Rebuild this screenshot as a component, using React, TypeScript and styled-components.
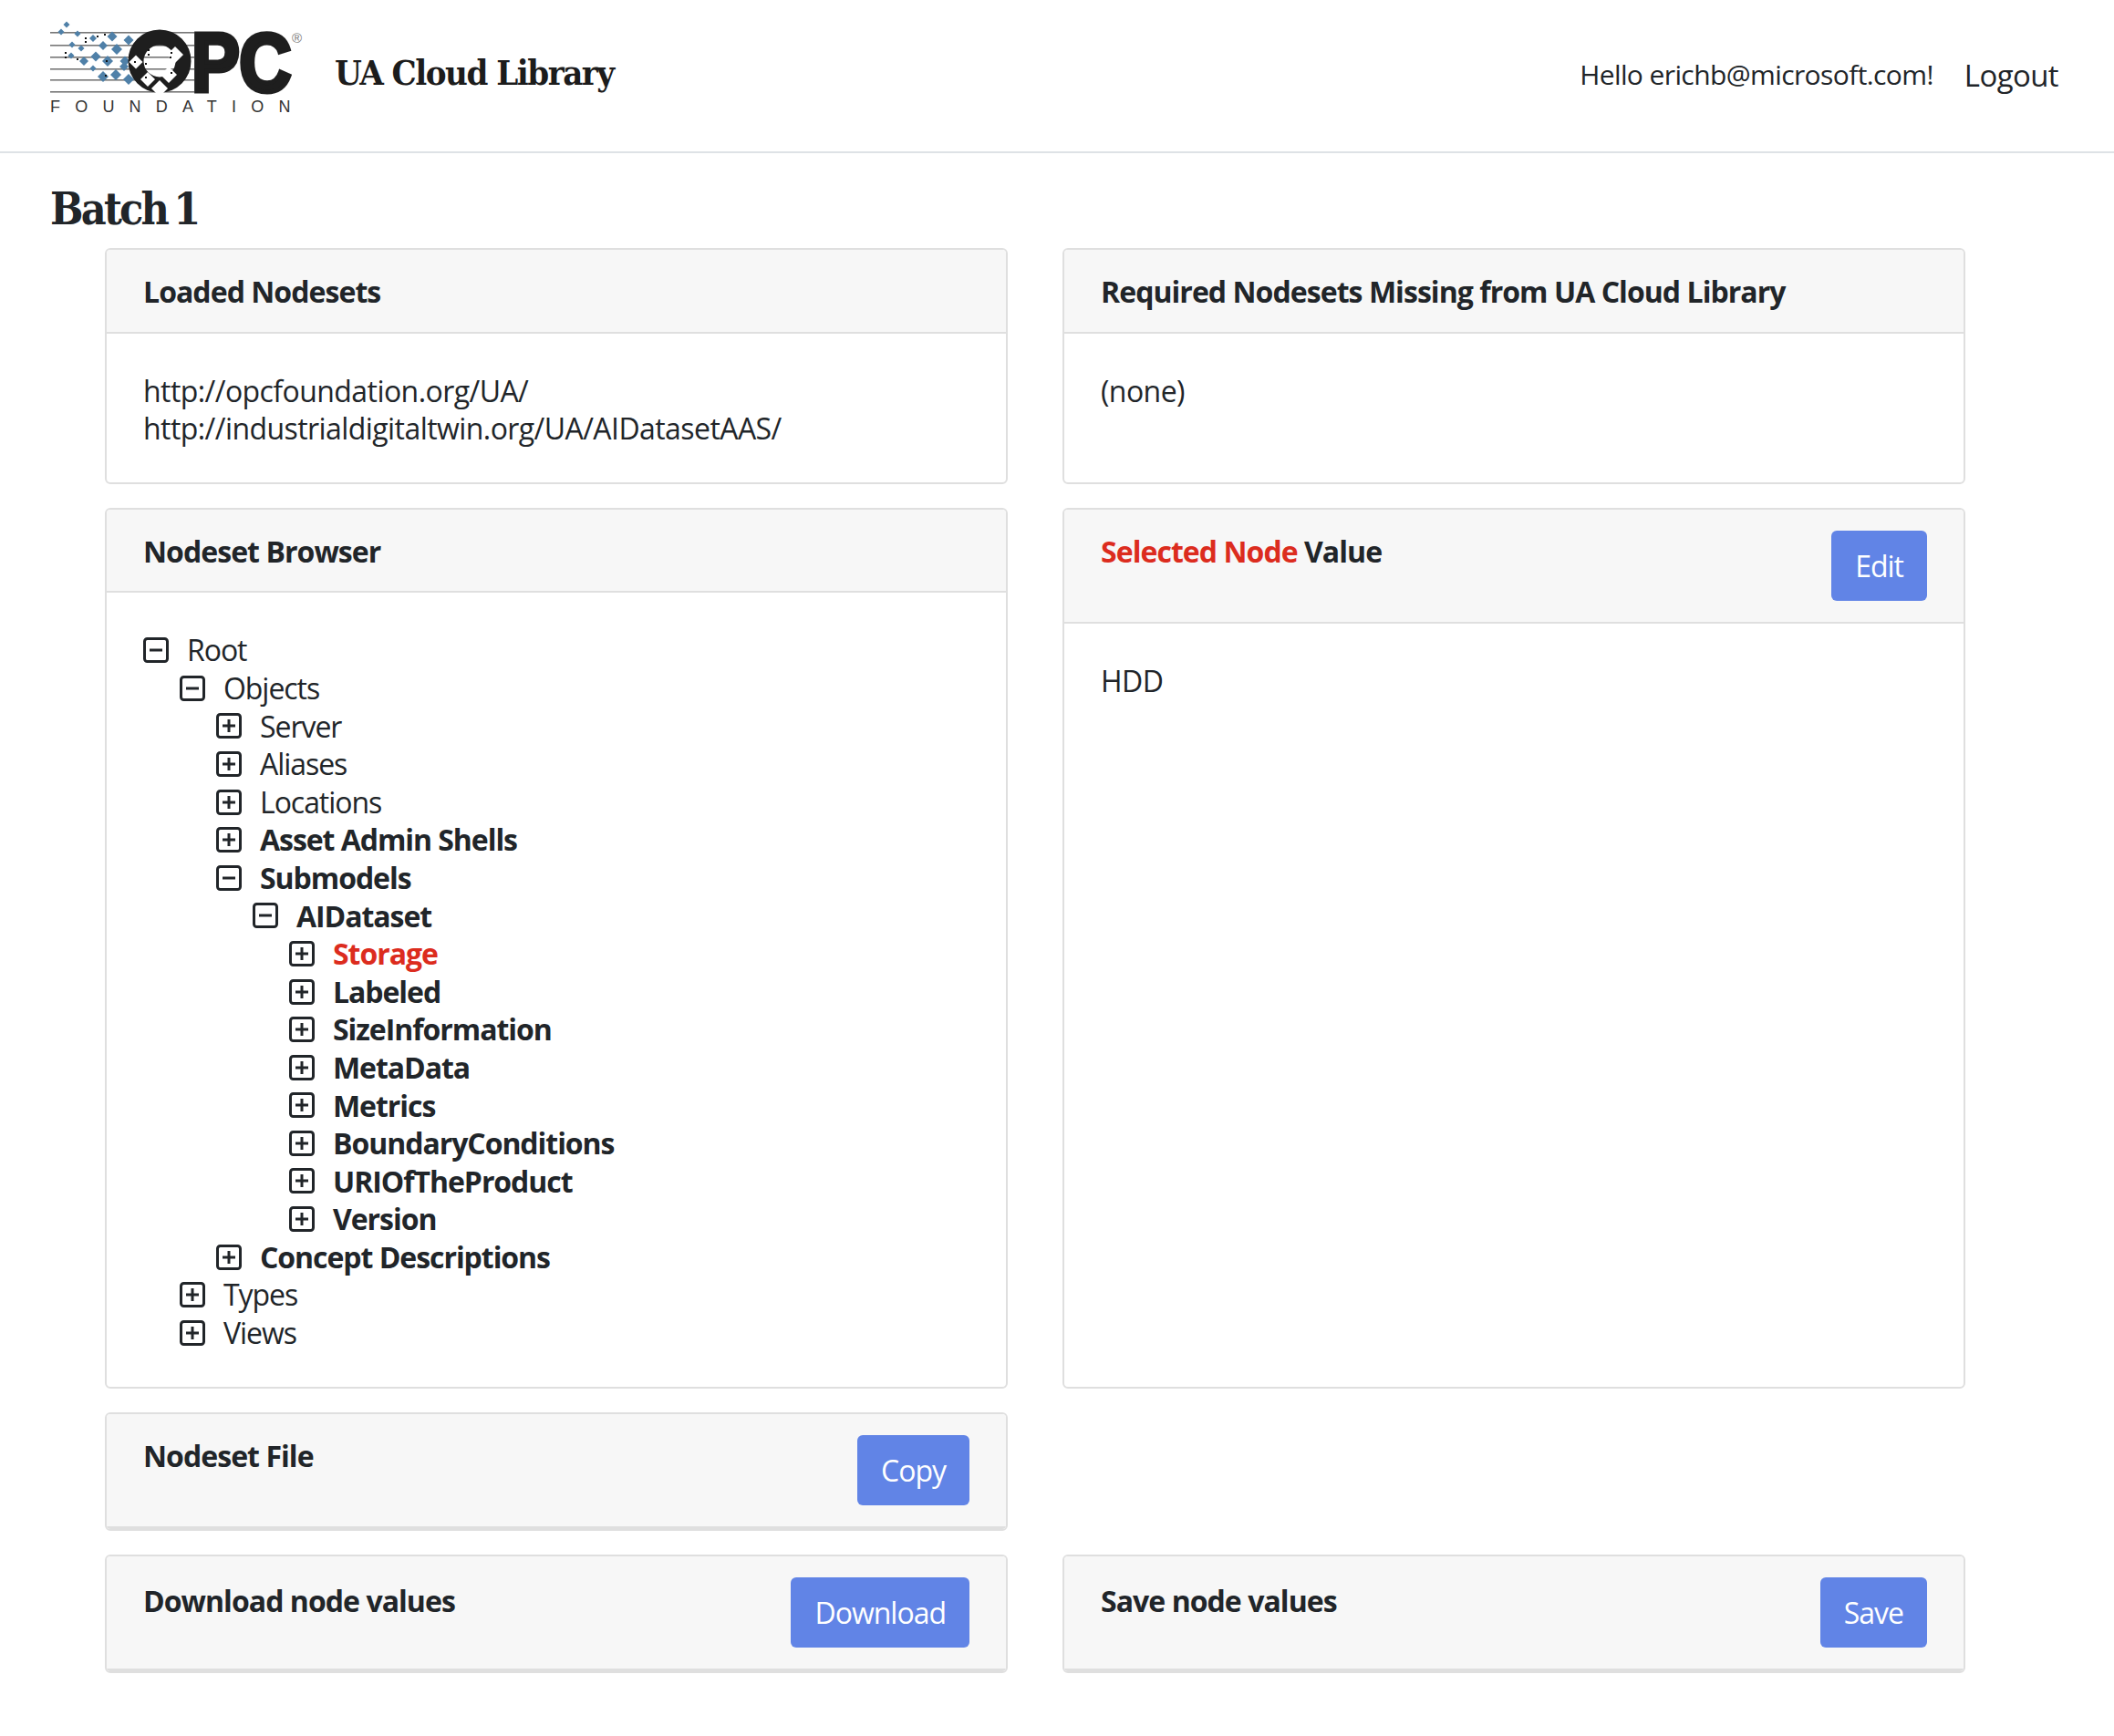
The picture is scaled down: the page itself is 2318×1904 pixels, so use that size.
import * as React from 'react'
import styled, { createGlobalStyle } from 'styled-components'

const dark = '#212529'
const red = '#dc2c1e'
const logoBlack = '#1e1e1e'

type TreeNode = {
  label: string
  depth: number
  open?: boolean
  bold?: boolean
  selected?: boolean
}

const nodes: TreeNode[] = [
  { label: 'Root', depth: 0, open: true },
  { label: 'Objects', depth: 1, open: true },
  { label: 'Server', depth: 2 },
  { label: 'Aliases', depth: 2 },
  { label: 'Locations', depth: 2 },
  { label: 'Asset Admin Shells', depth: 2, bold: true },
  { label: 'Submodels', depth: 2, open: true, bold: true },
  { label: 'AIDataset', depth: 3, open: true, bold: true },
  { label: 'Storage', depth: 4, bold: true, selected: true },
  { label: 'Labeled', depth: 4, bold: true },
  { label: 'SizeInformation', depth: 4, bold: true },
  { label: 'MetaData', depth: 4, bold: true },
  { label: 'Metrics', depth: 4, bold: true },
  { label: 'BoundaryConditions', depth: 4, bold: true },
  { label: 'URIOfTheProduct', depth: 4, bold: true },
  { label: 'Version', depth: 4, bold: true },
  { label: 'Concept Descriptions', depth: 2, bold: true },
  { label: 'Types', depth: 1 },
  { label: 'Views', depth: 1 },
]

// logo parts, in the svg's own units
const blueDiamonds = [
  [19, 7, 3.5], [13, 15, 3.5], [31, 17, 3.5], [48, 22, 4], [69, 20, 5.5], [87, 24, 5.5],
  [25, 29, 3.5], [35, 33, 3.5], [59, 30, 5], [74, 34, 6], [24, 41, 3.5], [51, 42, 5.5],
  [64, 47, 6], [38, 47, 5], [83, 47, 5.5], [48, 55, 3.5], [82, 53, 5], [59, 64, 6],
  [73, 62, 6], [87, 67, 6],
]
const whiteDiamonds = [
  [95, 48, 7.5], [138, 40, 9], [108, 67, 8], [131, 62, 9], [121, 77, 9],
]
const blackDots = [
  [40, 22], [40, 26], [18, 38], [18, 43], [61, 18], [53, 20], [31, 45], [62, 63], [63, 47],
  [109, 35], [109, 40], [134, 38], [133, 43], [134, 60], [94, 48], [106, 65], [106, 50],
]
const logoLines = [15, 29, 42, 55, 67, 80]

const diamond = (x: number, y: number, r: number) =>
  `${x},${y - r} ${x + r},${y} ${x},${y + r} ${x - r},${y}`

const Logo = () => (
  <svg width="290" height="138" viewBox="0 -6 290 138">
    {logoLines.map(y => (
      <rect key={y} x="1" y={y} width="158" height="1.6" fill="#777" />
    ))}
    {blueDiamonds.map(([x, y, r]) => (
      <polygon key={`${x}-${y}`} points={diamond(x, y, r)} fill="#4f80a8" />
    ))}
    <circle cx="121" cy="47" r="26" fill="none" stroke={logoBlack} strokeWidth="17" />
    {whiteDiamonds.map(([x, y, r]) => (
      <polygon key={`${x}-${y}`} points={diamond(x, y, r)} fill="#fff" />
    ))}
    {blackDots.map(([x, y]) => (
      <rect key={`${x}-${y}`} x={x - 1} y={y - 1} width="2" height="2" fill="#111" />
    ))}
    <text
      transform="translate(156 80) scale(0.88 1)"
      fontFamily="'Liberation Sans', sans-serif"
      fontWeight="700"
      fontSize="90"
      fill={logoBlack}
      stroke={logoBlack}
      strokeWidth="5"
    >
      PC
    </text>
    <text x="266" y="27" fontFamily="'Liberation Sans', sans-serif" fontSize="15" fill="#777">
      ®
    </text>
    <text
      x="1"
      y="103"
      fontFamily="'Liberation Sans', sans-serif"
      fontSize="18"
      fill="#333"
      letterSpacing="16.2"
    >
      FOUNDATION
    </text>
  </svg>
)

const Box = ({ open }: { open?: boolean }) => (
  <svg width="28" height="28" viewBox="0 0 28 28" fill="none" stroke={dark} strokeWidth="3">
    <rect x="1.5" y="1.5" width="25" height="25" rx="3" />
    <path d={open ? 'M7 14h14' : 'M7 14h14M14 7v14'} />
  </svg>
)

export default function App() {
  return (
    <>
      <GlobalStyle />
      <Header>
        <Brand>
          <Logo />
          <BrandName>UA Cloud Library</BrandName>
        </Brand>
        <UserArea>
          <Hello>Hello erichb@microsoft.com!</Hello>
          <Logout href="#">Logout</Logout>
        </UserArea>
      </Header>
      <Main>
        <PageTitle>Batch 1</PageTitle>
        <Grid>
          <Card>
            <CardHeader>
              <CardTitle>Loaded Nodesets</CardTitle>
            </CardHeader>
            <CardBody>
              <div>http://opcfoundation.org/UA/</div>
              <div>http://industrialdigitaltwin.org/UA/AIDatasetAAS/</div>
            </CardBody>
          </Card>
          <Card>
            <CardHeader>
              <CardTitle>Required Nodesets Missing from UA Cloud Library</CardTitle>
            </CardHeader>
            <CardBody>(none)</CardBody>
          </Card>
          <Card>
            <CardHeader>
              <CardTitle>Nodeset Browser</CardTitle>
            </CardHeader>
            <CardBody>
              <Tree>
                {nodes.map(node => (
                  <TreeRow key={node.label} $depth={node.depth}>
                    <Box open={node.open} />
                    <TreeLabel $bold={node.bold} $selected={node.selected}>
                      {node.label}
                    </TreeLabel>
                  </TreeRow>
                ))}
              </Tree>
            </CardBody>
          </Card>
          <Card>
            <ActionHeader>
              <ActionTitle>
                <Selected>Selected Node</Selected> Value
              </ActionTitle>
              <Button>Edit</Button>
            </ActionHeader>
            <CardBody>HDD</CardBody>
          </Card>
          <Card>
            <FooterHeader>
              <ActionTitle>Nodeset File</ActionTitle>
              <Button>Copy</Button>
            </FooterHeader>
          </Card>
          <div />
          <Card>
            <FooterHeader>
              <ActionTitle $drop={5}>Download node values</ActionTitle>
              <Button>Download</Button>
            </FooterHeader>
          </Card>
          <Card>
            <FooterHeader>
              <ActionTitle $drop={5}>Save node values</ActionTitle>
              <Button>Save</Button>
            </FooterHeader>
          </Card>
        </Grid>
      </Main>
    </>
  )
}

const GlobalStyle = createGlobalStyle`
  html, body {
    margin: 0;
    background: #fff;
  }
  body {
    font-family: 'Open Sans', 'Noto Sans', sans-serif;
    font-size: 32px;
    line-height: 41.6px;
    color: ${dark};
    letter-spacing: -0.57px;
  }
`

const Header = styled.header`
  height: 166px;
  box-sizing: content-box;
  border-bottom: 2px solid #dee2e6;
  display: flex;
  align-items: center;
  justify-content: space-between;
  padding: 0 61px 0 54px;
`

const Brand = styled.div`
  display: flex;
  align-items: center;
  gap: 23px;
`

const BrandName = styled.div`
  font-family: 'DejaVu Serif Condensed', 'DejaVu Serif', serif;
  font-weight: 700;
  font-size: 38px;
  letter-spacing: -1.5px;
  color: #1c1c1c;
  padding-bottom: 6px;
`

const UserArea = styled.div`
  display: flex;
  align-items: center;
  gap: 34px;
`

const Hello = styled.span`
  font-size: 30px;
  letter-spacing: -0.6px;
  padding-bottom: 2px;
`

const Logout = styled.a`
  font-size: 33px;
  letter-spacing: -0.6px;
  color: ${dark};
  text-decoration: none;
`

const Main = styled.main`
  padding: 0 55px;
`

const PageTitle = styled.h1`
  font-family: 'DejaVu Serif Condensed', 'DejaVu Serif', serif;
  font-weight: 700;
  font-size: 48px;
  line-height: 56px;
  letter-spacing: -2.8px;
  word-spacing: -5px;
  margin: 0;
  padding: 33px 0 15px;
`

const Grid = styled.div`
  margin-left: 60px;
  display: grid;
  grid-template-columns: 990px 990px;
  column-gap: 60px;
  row-gap: 26px;
`

const Card = styled.section`
  border: 2px solid #dfdfdf;
  border-radius: 6px;
  background: #fff;
  overflow: hidden;
`

const CardHeader = styled.div`
  background: #f7f7f7;
  border-bottom: 2px solid #dfdfdf;
  padding: 25px 40px 23px;
`

const ActionHeader = styled(CardHeader)`
  display: flex;
  justify-content: space-between;
  align-items: flex-start;
  padding-top: 23px;
  padding-bottom: 23px;
`

const FooterHeader = styled(ActionHeader)`
  border-bottom-width: 3px;
`

const CardTitle = styled.h2`
  margin: 0;
  font-size: 32px;
  line-height: 41.6px;
  font-weight: 700;
  letter-spacing: -0.95px;
`

const ActionTitle = styled(CardTitle)<{ $drop?: number }>`
  margin-top: ${p => p.$drop ?? 2}px;
`

const Selected = styled.span`
  color: ${red};
`

const Button = styled.button`
  font-family: inherit;
  font-size: 32px;
  letter-spacing: -1px;
  line-height: 44px;
  height: 77px;
  color: #fff;
  background: #6184e6;
  border: 0;
  border-radius: 6px;
  padding: 2px 26px 0;
`

const CardBody = styled.div`
  padding: 42px 40px 38px;
`

const Tree = styled.div`
  display: flex;
  flex-direction: column;
`

const TreeRow = styled.div<{ $depth: number }>`
  display: flex;
  align-items: center;
  gap: 20px;
  height: 41.6px;
  padding-left: ${p => p.$depth * 40}px;
`

const TreeLabel = styled.span<{ $bold?: boolean; $selected?: boolean }>`
  font-weight: ${p => (p.$bold ? 700 : 400)};
  letter-spacing: -1.05px;
  color: ${p => (p.$selected ? red : dark)};
`
